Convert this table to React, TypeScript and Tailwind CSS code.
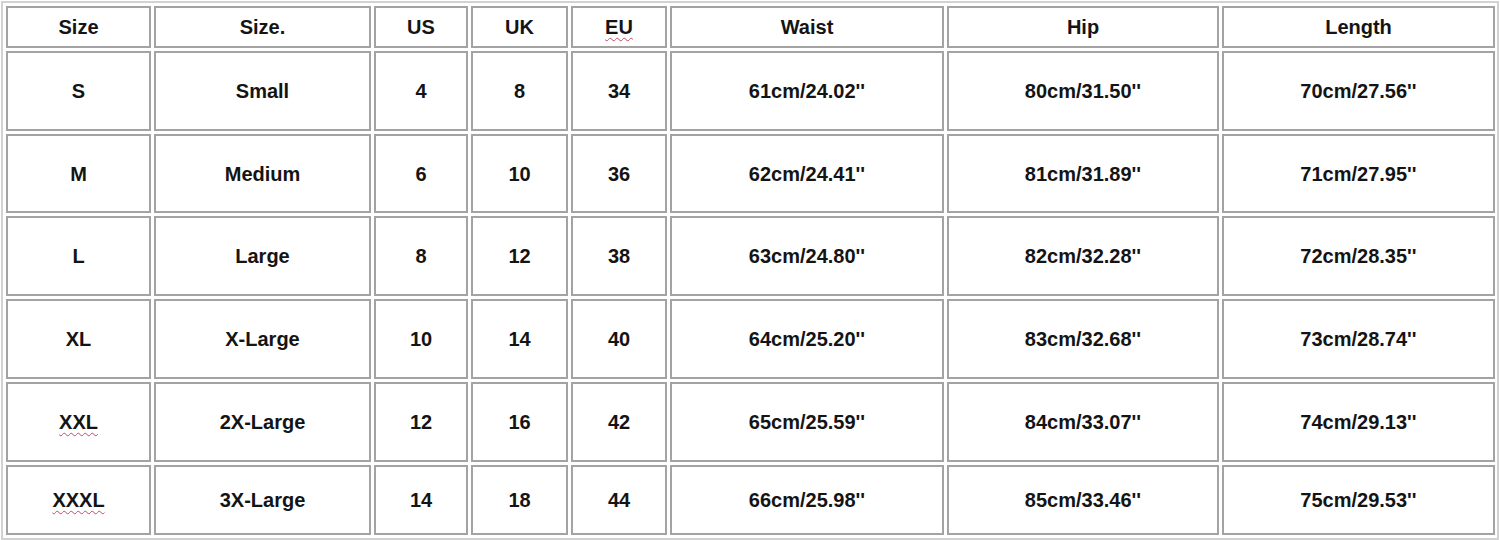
import React from "react";

type Cell = { text: string; squiggle?: boolean };

const header: Cell[] = [
  { text: "Size" },
  { text: "Size." },
  { text: "US" },
  { text: "UK" },
  { text: "EU", squiggle: true },
  { text: "Waist" },
  { text: "Hip" },
  { text: "Length" },
];

const rows: Cell[][] = [
  ["S", "Small", "4", "8", "34", "61cm/24.02''", "80cm/31.50''", "70cm/27.56''"],
  ["M", "Medium", "6", "10", "36", "62cm/24.41''", "81cm/31.89''", "71cm/27.95''"],
  ["L", "Large", "8", "12", "38", "63cm/24.80''", "82cm/32.28''", "72cm/28.35''"],
  ["XL", "X-Large", "10", "14", "40", "64cm/25.20''", "83cm/32.68''", "73cm/28.74''"],
  ["XXL", "2X-Large", "12", "16", "42", "65cm/25.59''", "84cm/33.07''", "74cm/29.13''"],
  ["XXXL", "3X-Large", "14", "18", "44", "66cm/25.98''", "85cm/33.46''", "75cm/29.53''"],
].map((r) =>
  r.map((t) => ({ text: t, squiggle: t === "XXL" || t === "XXXL" }))
);

function SizeCell({ cell }: { cell: Cell }) {
  return (
    <div className="flex items-center justify-center border-2 border-[#a3a3a3] bg-white">
      <span
        className={
          cell.squiggle
            ? "underline decoration-wavy decoration-[#c24a6a] decoration-1 underline-offset-[3px]"
            : ""
        }
      >
        {cell.text}
      </span>
    </div>
  );
}

export default function App() {
  return (
    <div className="h-[540px] w-[1500px] bg-white p-px">
      <div
        className="grid grid-cols-[145px_217px_94px_97px_96px_274px_272px_273px] grid-rows-[42px_80px_79px_80px_80px_80px_70px] gap-[3px] border-2 border-[#d2d2d2] p-[3px] text-[20px] font-bold text-[#141414]"
        style={{ fontFamily: '"Liberation Sans", Arial, sans-serif' }}
      >
        {header.map((c, i) => (
          <SizeCell key={"h" + i} cell={c} />
        ))}
        {rows.map((r, ri) =>
          r.map((c, ci) => <SizeCell key={ri + "-" + ci} cell={c} />)
        )}
      </div>
    </div>
  );
}
